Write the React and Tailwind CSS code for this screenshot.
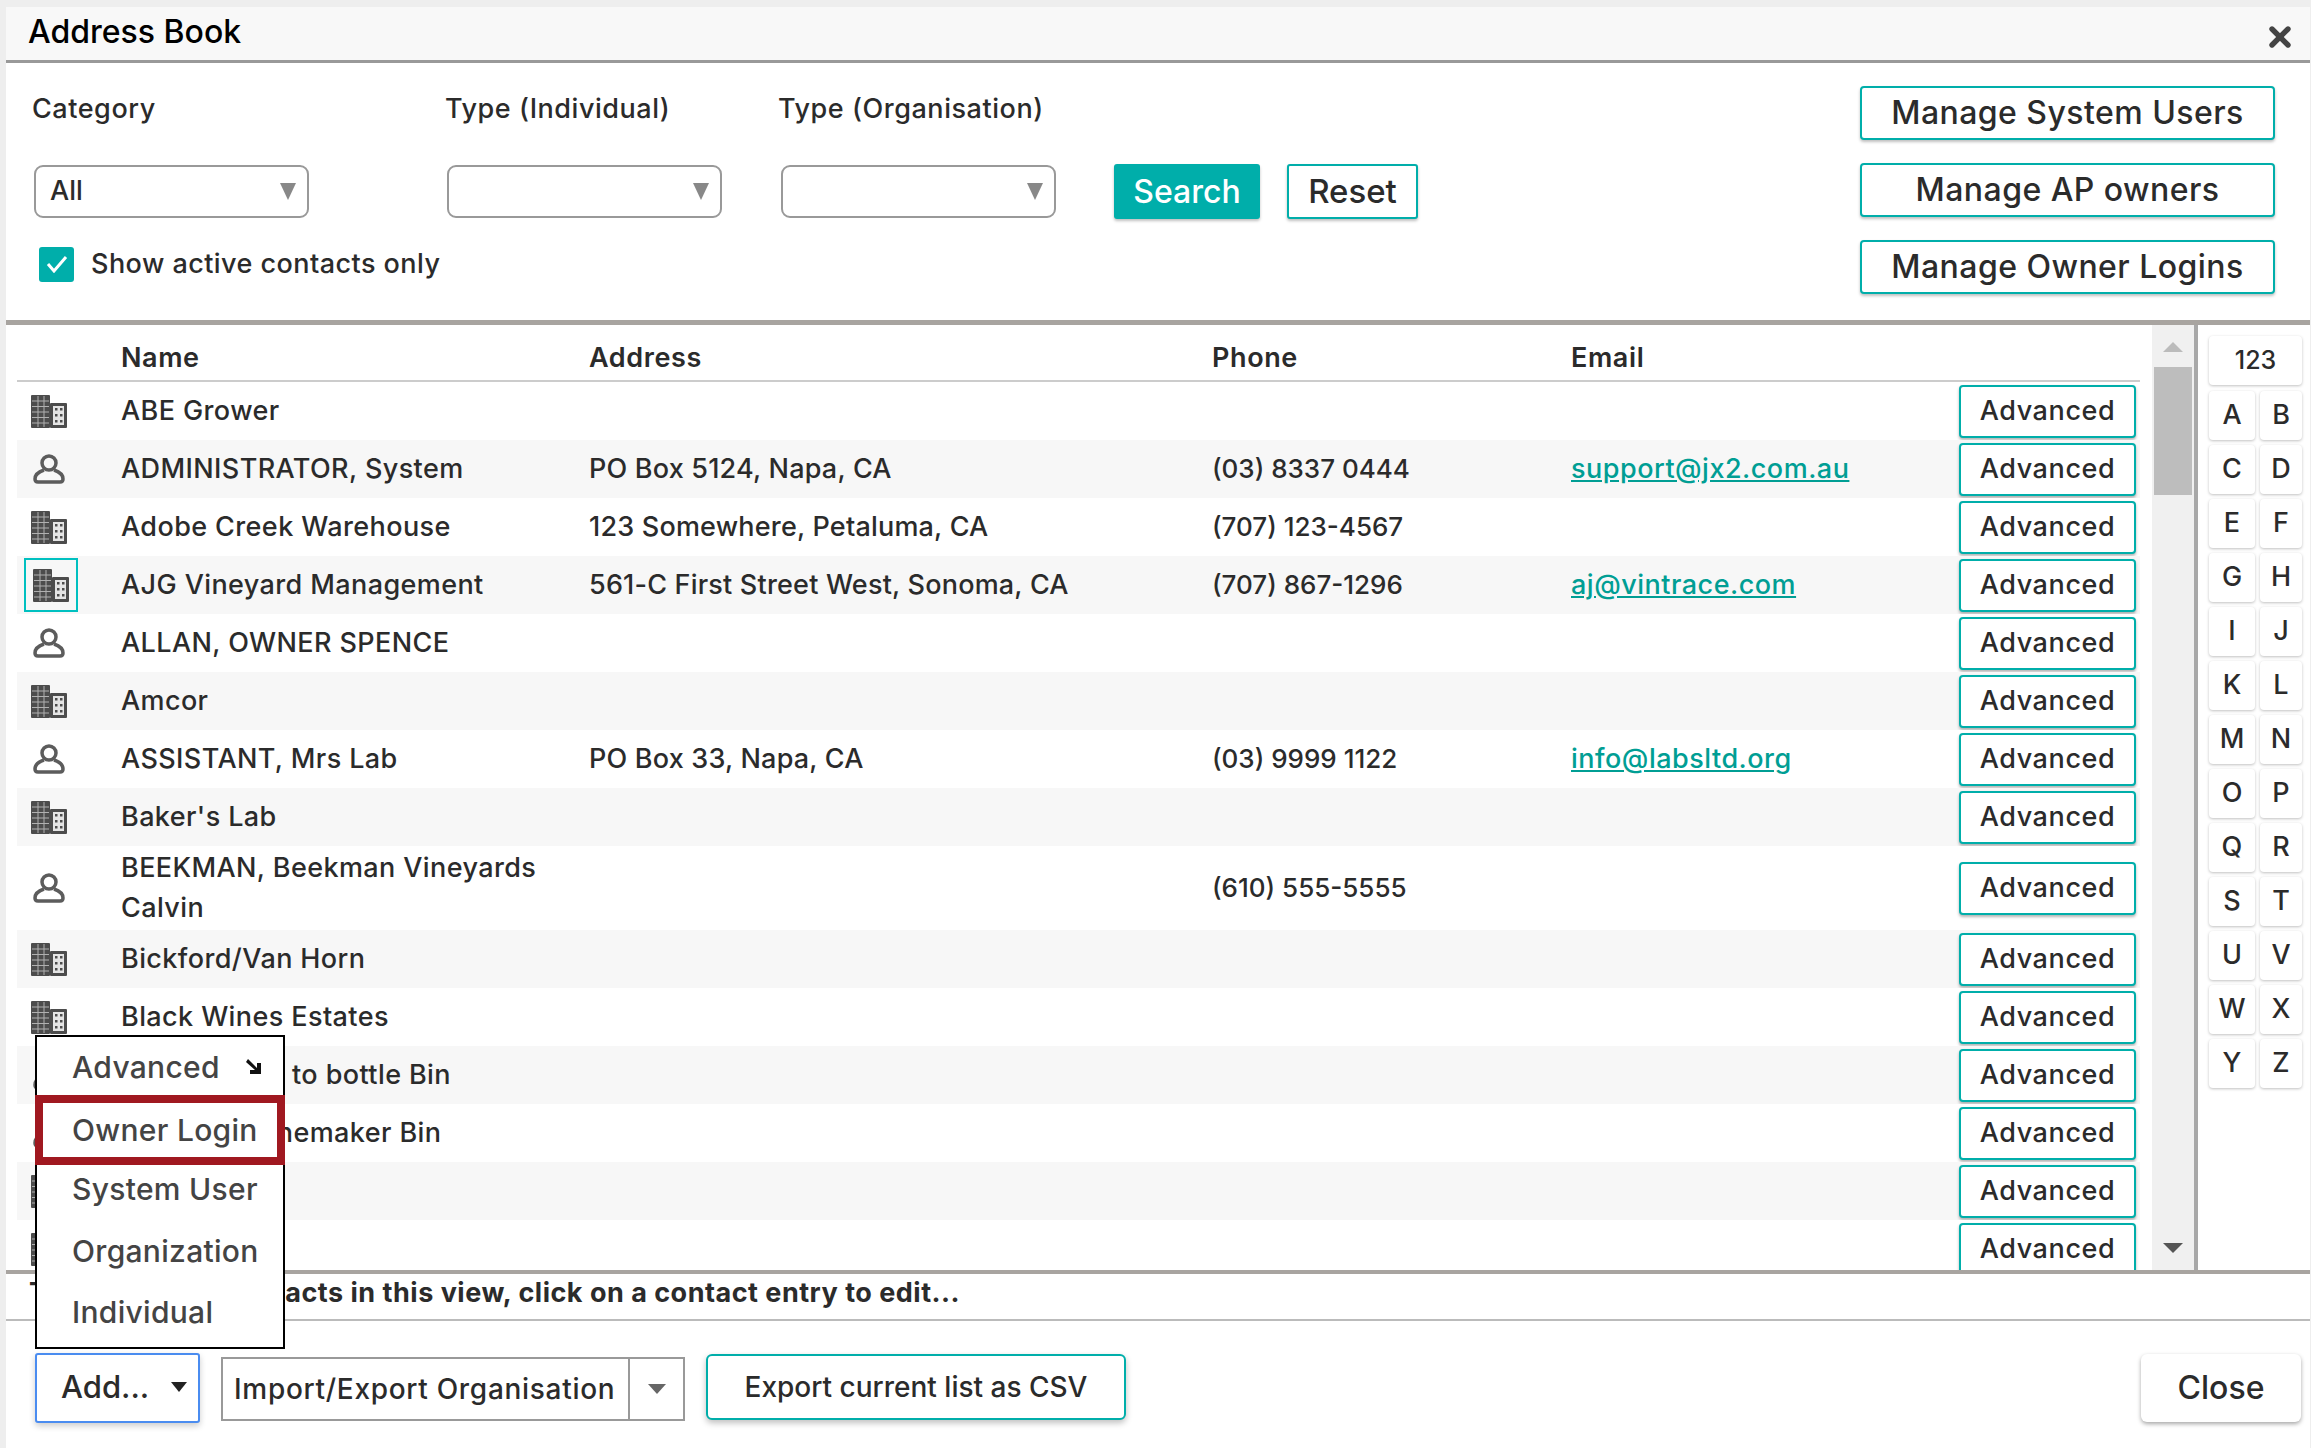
import React from 'react';
import { X } from 'lucide-react';

const rows = [
    { type: 'org', name: 'ABE Grower' },
    { type: 'person', name: 'ADMINISTRATOR, System', address: 'PO Box 5124, Napa, CA', phone: '(03) 8337 0444', email: 'support@jx2.com.au' },
    { type: 'org', name: 'Adobe Creek Warehouse', address: '123 Somewhere, Petaluma, CA', phone: '(707) 123-4567' },
    { type: 'org', name: 'AJG Vineyard Management', address: '561-C First Street West, Sonoma, CA', phone: '(707) 867-1296', email: 'aj@vintrace.com', focused: true },
    { type: 'person', name: 'ALLAN, OWNER SPENCE' },
    { type: 'org', name: 'Amcor' },
    { type: 'person', name: 'ASSISTANT, Mrs Lab', address: 'PO Box 33, Napa, CA', phone: '(03) 9999 1122', email: 'info@labsltd.org' },
    { type: 'org', name: "Baker's Lab" },
    { type: 'person', name: 'BEEKMAN, Beekman Vineyards Calvin', phone: '(610) 555-5555', tall: true },
    { type: 'org', name: 'Bickford/Van Horn' },
    { type: 'org', name: 'Black Wines Estates' },
    { type: 'person', name: 'BINS, Ready to bottle Bin' },
    { type: 'person', name: 'BIN, The Winemaker Bin' },
    { type: 'org', name: 'Bottling Co' },
    { type: 'org', name: 'Cellar Co' },
];

const letters = 'ABCDEFGHIJKLMNOPQRSTUVWXYZ'.split('');

const BuildingIcon = () => (
    <svg width="36" height="33" viewBox="0 0 36 33">
        <rect x="0" y="0" width="19" height="33" rx="1" fill="#4c4c4c" />
        <rect x="19" y="8" width="17" height="25" rx="1" fill="#4c4c4c" />
        <rect x="22" y="11" width="11" height="19" fill="#e4e4e4" />
        {[5.5, 11, 16.5, 22, 27.5].map((y) => (
            <rect key={y} x="1" y={y} width="17" height="1" fill="#b0b0b0" />
        ))}
        {[6.5, 12.5].map((x) => (
            <rect key={x} x={x} y="1" width="1" height="31" fill="#b0b0b0" />
        ))}
        {[14, 20, 26].map((y) => [25, 30].map((x) => (
            <rect key={x + '-' + y} x={x - 1} y={y - 1} width="2.5" height="2.5" fill="#4c4c4c" />
        )))}
    </svg>
);

const PersonIcon = () => (
    <svg width="32" height="30" viewBox="0 0 32 30" fill="none" stroke="#5c5c5c" strokeWidth="3.5">
        <circle cx="16" cy="9" r="7" />
        <path d="M11 16 C5 18 2 21 2 25 C2 27 3 28 5 28 H27 C29 28 30 27 30 25 C30 21 27 18 21 16" />
    </svg>
);

const Caret = ({ className }) => (
    <svg className={className} viewBox="0 0 10 10" preserveAspectRatio="none">
        <path d="M0 0 H10 L5 10 Z" fill="currentColor" />
    </svg>
);

const SelectBox = ({ value, className }) => (
    <div className={"h-[53px] w-[275px] rounded-[9px] border-2 border-[#999] flex items-center justify-between pl-[14px] pr-[11px] text-[27px] " + className}>
        <span>{value}</span>
        <Caret className="w-[16px] h-[17px] text-[#888]" />
    </div>
);

const ManageButton = ({ children }) => (
    <button className="w-[415px] h-[54px] rounded-[4px] border-2 border-[#00aeaa] bg-white shadow-[0_2px_3px_rgba(0,0,0,0.25)] text-[32px] tracking-[0.45px] text-center">
        {children}
    </button>
);

const Row = ({ row, striped }) => (
    <div className={"flex items-center shrink-0 leading-[40px] " + (row.tall ? "h-[84px] " : "h-[58px] ") + (striped ? "bg-[#f7f7f7]" : "bg-white")}>
        <div className="w-[104px] shrink-0 flex items-center">
            {row.focused ? (
                <div className="ml-[7px] w-[54px] h-[54px] border-2 border-[#00c0c0] flex items-center justify-center">
                    <BuildingIcon />
                </div>
            ) : (
                <div className="ml-[14px] w-[36px] flex justify-center"><span className="flex">{row.type === 'org' ? <BuildingIcon /> : <PersonIcon />}</span></div>
            )}
        </div>
        <div className="w-[468px] shrink-0 pr-[30px] text-[27px] tracking-[0.4px]">{row.name}</div>
        <div className="w-[623px] shrink-0 text-[27px] tracking-[0.2px]">{row.address}</div>
        <div className="w-[359px] shrink-0">{row.phone}</div>
        <div className="flex-1">
            {row.email && <a className="text-[#009e94] underline text-[27px] tracking-[0.5px]">{row.email}</a>}
        </div>
        <button className="w-[177px] h-[53px] mr-[4px] shrink-0 rounded-[4px] border-2 border-[#00aeaa] bg-white shadow-[0_2px_3px_rgba(0,0,0,0.3)] text-[27px] tracking-[0.6px]">
            Advanced
        </button>
    </div>
);

export default function App() {
    return (
        <div className="relative h-[1448px] w-[2311px] overflow-hidden flex flex-col bg-white border-l-[6px] border-t-[7px] border-r-[1px] border-[#eeeeee] text-[#2b2b2b] text-[26px] font-['Inter','Liberation_Sans',sans-serif] font-medium">
            <div className="h-[56px] shrink-0 bg-[#f8f8f8] border-b-[3px] border-[#999] flex items-center justify-between pl-[22px] pr-[14px]">
                <span className="text-[32px] text-black mt-[-4px]">Address Book</span>
                <X className="w-[32px] h-[32px] mt-[6px] text-[#444]" strokeWidth={4} />
            </div>

            <div className="h-[262px] shrink-0 border-b-[5px] border-[#a8a4a0] flex justify-between pr-[35px]">
                <div>
                    <div className="flex mt-[29px] h-[34px] items-center text-[27px] tracking-[0.55px]">
                        <span className="ml-[26px] w-[413px]">Category</span>
                        <span className="w-[333px]">Type (Individual)</span>
                        <span>Type (Organisation)</span>
                    </div>
                    <div className="flex items-center mt-[38px] ml-[28px]">
                        <SelectBox value="All" />
                        <SelectBox value="" className="ml-[138px]" />
                        <SelectBox value="" className="ml-[59px]" />
                        <button className="ml-[58px] w-[146px] h-[55px] rounded-[3px] bg-[#00aeaa] text-white text-[32px] shadow-[0_2px_3px_rgba(0,0,0,0.25)]">Search</button>
                        <button className="ml-[27px] w-[131px] h-[55px] rounded-[3px] border-2 border-[#00aeaa] bg-white text-[33px] shadow-[0_2px_3px_rgba(0,0,0,0.25)]">Reset</button>
                    </div>
                    <div className="flex items-center mt-[25px] ml-[33px]">
                        <div className="w-[35px] h-[35px] rounded-[3px] bg-[#00aeaa] flex items-center justify-center">
                            <svg width="22" height="18" viewBox="0 0 22 18" fill="none" stroke="white" strokeWidth="3"><path d="M2 9 L8 16 L20 2" /></svg>
                        </div>
                        <span className="ml-[17px] text-[27px] tracking-[0.45px]">Show active contacts only</span>
                    </div>
                </div>
                <div className="flex flex-col gap-[23px] pt-[23px]">
                    <ManageButton>Manage System Users</ManageButton>
                    <ManageButton>Manage AP owners</ManageButton>
                    <ManageButton>Manage Owner Logins</ManageButton>
                </div>
            </div>

            <div className="flex-1 min-h-0 flex">
                <div className="flex-1 min-w-0 overflow-hidden flex flex-col pl-[11px] pr-[12px]">
                    <div className="h-[57px] shrink-0 border-b-2 border-[#ccc] flex items-center font-semibold pt-[12px] text-[27px] tracking-[0.6px]">
                        <span className="ml-[104px] w-[468px]">Name</span>
                        <span className="w-[623px]">Address</span>
                        <span className="w-[359px]">Phone</span>
                        <span>Email</span>
                    </div>
                    {rows.map((row, i) => <Row key={row.name} row={row} striped={i % 2 === 1} />)}
                </div>
                <div className="w-[42px] shrink-0 bg-[#f0f0f0] flex flex-col items-center justify-between pt-[17px] pb-[17px] px-[2px]">
                    <svg width="20" height="10" viewBox="0 0 20 10"><path d="M0 10 H20 L10 0 Z" fill="#bbb" /></svg>
                    <div className="w-full h-[128px] bg-[#bdbdbd] mt-[15px]" />
                    <div className="flex-1" />
                    <svg width="20" height="10" viewBox="0 0 20 10"><path d="M0 0 H20 L10 10 Z" fill="#555" /></svg>
                </div>
                <div className="w-[116px] shrink-0 border-l-4 border-[#a8a8a8] pl-[11px] pt-[11px]">
                    <div className="grid grid-cols-[46px_42px] gap-x-[5px] gap-y-[5px] grid-rows-[50px] auto-rows-[49px]">
                        <div className="col-span-2 h-[49px] flex items-center justify-center rounded-[4px] bg-white shadow-[0_1px_3px_rgba(0,0,0,0.25)] text-[25px]">123</div>
                        {letters.map((l) => (
                            <div key={l} className="flex items-center justify-center rounded-[4px] bg-white shadow-[0_1px_3px_rgba(0,0,0,0.25)] text-[27px]">{l}</div>
                        ))}
                    </div>
                </div>
            </div>

            <div className="h-[51px] shrink-0 border-t-[4px] border-b-[2px] border-t-[#a8a4a0] border-b-[#bbb] flex items-center pl-[23px] pb-[6px] font-bold text-[27px] tracking-[0.5px]">
                There are 274 contacts in this view, click on a contact entry to edit...
            </div>

            <div className="h-[127px] shrink-0 flex items-start pt-[32px] pl-[29px] pr-[9px]">
                <button className="w-[165px] h-[70px] rounded-[3px] border-2 border-[#4a8cf0] bg-white shadow-[0_3px_6px_rgba(0,0,0,0.2)] flex items-center justify-between pl-[24px] pr-[11px] pb-[2px] text-[31px]">
                    Add...
                    <Caret className="w-[16px] h-[10px] text-[#222]" />
                </button>
                <div className="ml-[21px] mt-[4px] w-[464px] h-[64px] border-2 border-[#999] flex items-center">
                    <span className="w-[407px] pl-[11px] border-r-2 border-[#999] h-full flex items-center text-[28px] tracking-[0.7px]">Import/Export Organisation</span>
                    <div className="flex-1 flex justify-center"><Caret className="w-[18px] h-[10px] text-[#666]" /></div>
                </div>
                <button className="ml-[21px] mt-[1px] w-[420px] h-[66px] rounded-[6px] border-2 border-[#00aeaa] bg-white shadow-[0_3px_6px_rgba(0,0,0,0.25)] text-[28px]">
                    Export current list as CSV
                </button>
                <button className="ml-auto mt-[1px] w-[160px] h-[68px] rounded-[6px] bg-white shadow-[0_2px_4px_rgba(0,0,0,0.35)] text-[32px]">Close</button>
            </div>

            <div className="absolute left-[29px] top-[1028px] w-[250px] h-[314px] bg-white border-2 border-black flex flex-col text-[#444] text-[30px] tracking-[0.3px]">
                <div className="h-[60px] shrink-0 flex items-center justify-between pl-[35px] pr-[21px]">
                    <span>Advanced</span>
                    <svg width="16" height="16" viewBox="0 0 16 16" fill="#111"><path d="M2 0 L11 9 V4 L15 4 V15 H4 V11 H9 L0 3 Z" /></svg>
                </div>
                <div className="h-[70px] shrink-0 -mx-[2px] border-y-[8px] border-x-[8px] border-[#a01820] flex items-center pl-[29px] mt-[-2px]">Owner Login</div>
                <div className="h-[61px] shrink-0 flex items-center pl-[35px] mt-[-6px]">System User</div>
                <div className="h-[61px] shrink-0 flex items-center pl-[35px] mt-[1px]">Organization</div>
                <div className="h-[61px] shrink-0 flex items-center pl-[35px]">Individual</div>
            </div>
        </div>
    );
}
